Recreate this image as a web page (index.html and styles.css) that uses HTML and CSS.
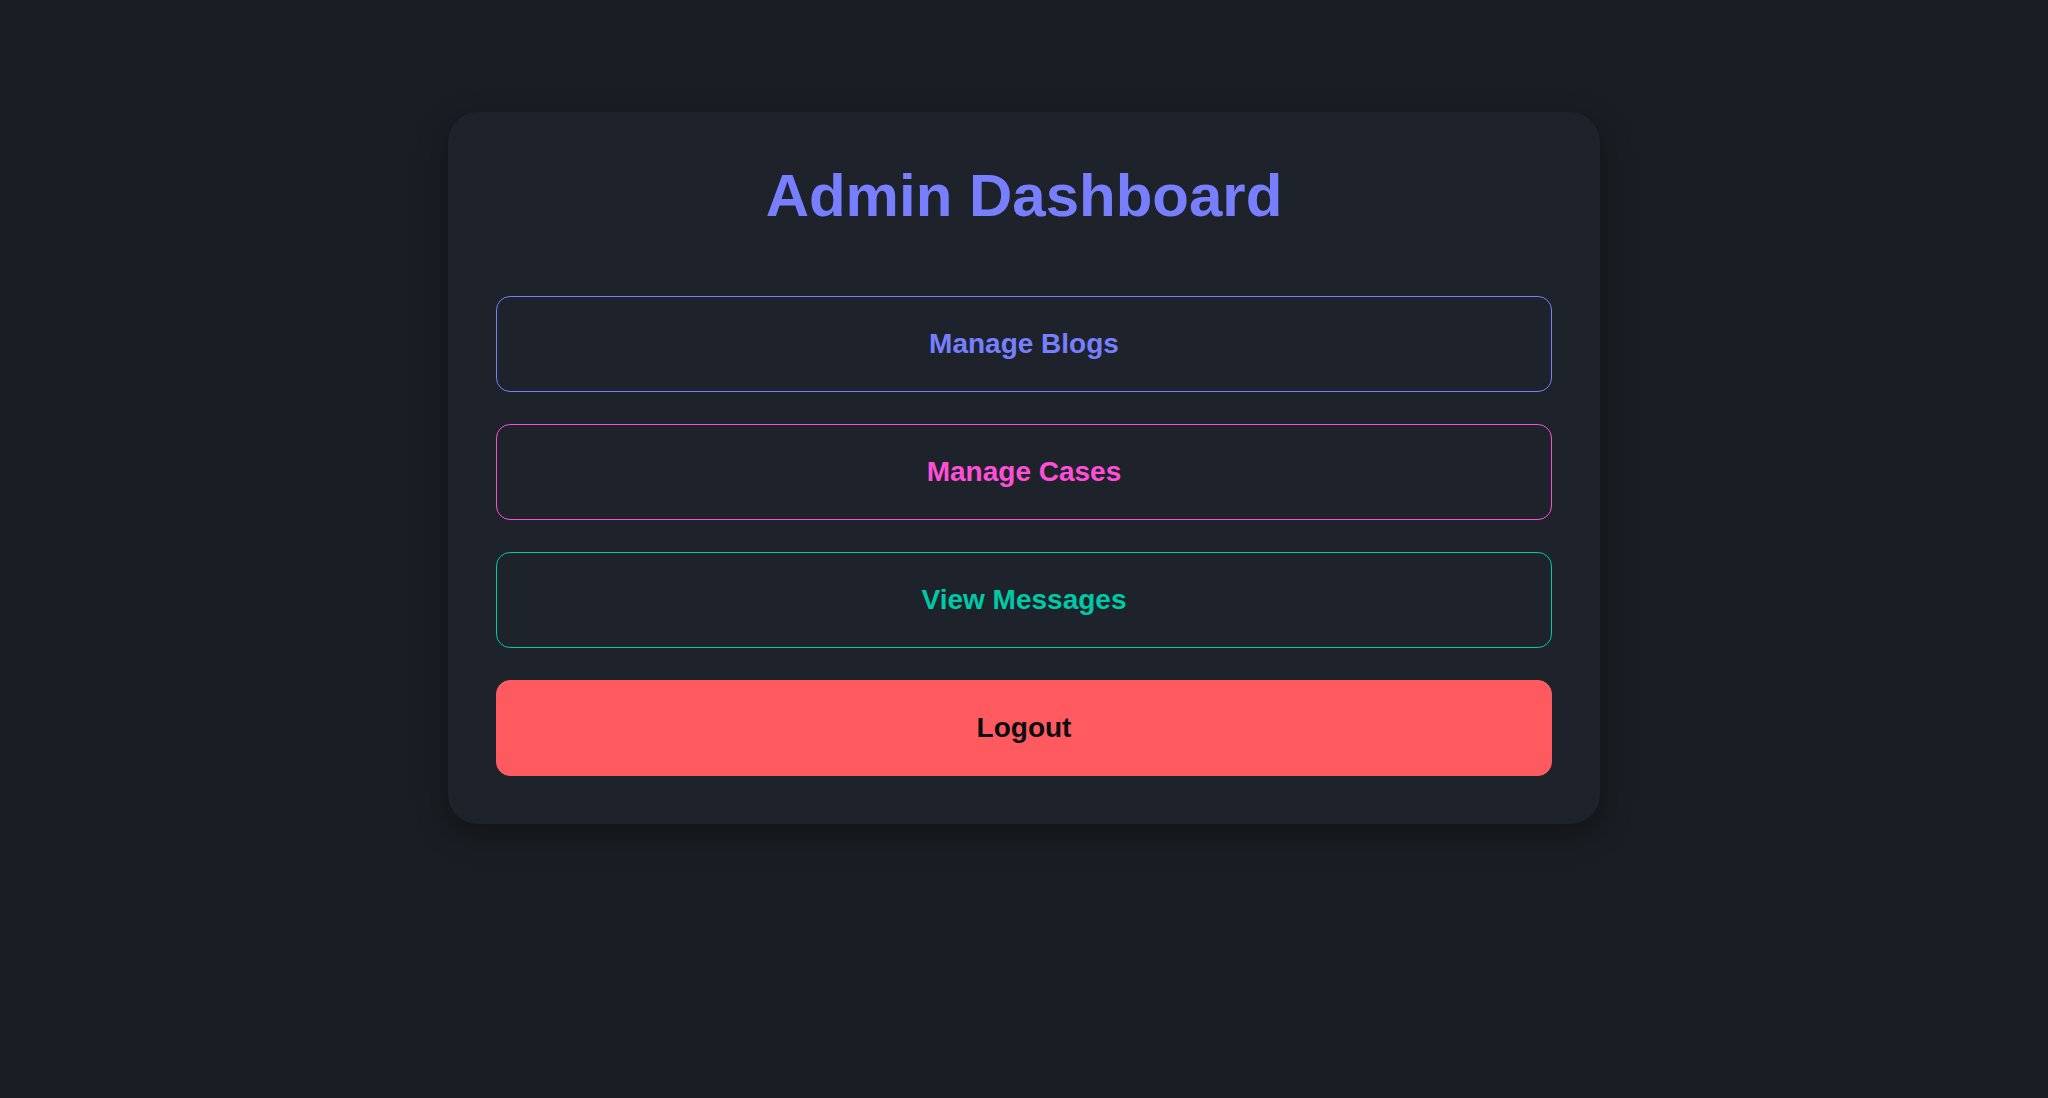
FILE: index.html
```html
<!DOCTYPE html>
<html lang="en">
<head>
<meta charset="utf-8">
<title>Admin Dashboard</title>
<link rel="stylesheet" href="styles.css">
</head>
<body>
<main class="page">
  <section class="card">
    <h1 class="title">Admin Dashboard</h1>
    <nav class="actions">
      <a class="btn btn-blogs" href="#">Manage Blogs</a>
      <a class="btn btn-cases" href="#">Manage Cases</a>
      <a class="btn btn-messages" href="#">View Messages</a>
      <button class="btn btn-logout" type="button">Logout</button>
    </nav>
  </section>
</main>
</body>
</html>
```
FILE: styles.css
```css
* { box-sizing: border-box; }
html, body {
  margin: 0;
  padding: 0;
  background: #1a1d23;
  font-family: "Liberation Sans", Arial, sans-serif;
}
.page {
  min-height: 1098px;
  display: flex;
  justify-content: center;
  align-items: flex-start;
  padding-top: 112px;
}
.card {
  width: 1152px;
  background: #1e232b;
  border-radius: 30px;
  padding: 48px;
  box-shadow: 0 10px 30px rgba(0, 0, 0, 0.35);
}
.title {
  margin: 2px 0 67px;
  text-align: center;
  font-size: 60px;
  font-weight: 700;
  color: #777fff;
  line-height: 67px;
}
.actions {
  display: flex;
  flex-direction: column;
  gap: 32px;
}
.btn {
  display: flex;
  align-items: center;
  justify-content: center;
  height: 96px;
  border-radius: 14px;
  border: 1.5px solid currentColor;
  background: transparent;
  font-family: inherit;
  font-size: 28px;
  font-weight: 700;
  text-decoration: none;
  cursor: pointer;
}
.btn-blogs { color: #777fff; }
.btn-cases { color: #ff4fd8; }
.btn-messages { color: #00c9a7; }
.btn-logout {
  width: 100%;
  background: #ff5a5f;
  border-color: #ff5a5f;
  color: #0d0d0f;
}
```
